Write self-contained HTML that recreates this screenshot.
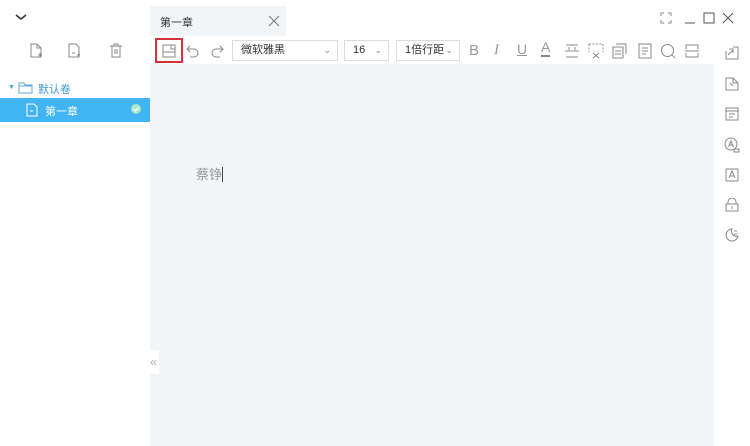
<!DOCTYPE html>
<html><head><meta charset="utf-8"><style>
*{margin:0;padding:0;box-sizing:border-box}
body{width:750px;height:446px;overflow:hidden;background:#fff;font-family:"Liberation Sans","Noto Sans CJK SC",sans-serif;position:relative;font-size:12px;color:#333}
.a{position:absolute}
svg{position:absolute;fill:none;stroke:#888;stroke-width:1}
.sel{border:1px solid #ddd;background:#fff;height:21px;top:40px;font-size:11px;line-height:19px;padding-left:8px;color:#333}
.sel i{position:absolute;right:6px;top:0;font-style:normal;font-size:9px;color:#888}
</style></head><body>
<svg style="left:14px;top:12px" width="14" height="10"><path d="M2 3l5 4 5-4" stroke="#333" stroke-width="1.6"/></svg>
<svg style="left:28px;top:43px" width="16" height="16"><path d="M3 1h6l4 4v9H3z M9 1v4h4 M10 12h4 M12 10v4"/></svg>
<svg style="left:66px;top:43px" width="16" height="16"><path d="M3 1h7l3 3v10H3z M6 10h3 M11 12h3 M12.5 10.5v3"/></svg>
<svg style="left:108px;top:43px" width="16" height="16"><path d="M2 3h12 M6 3V1h4v2 M4 3v11h8V3 M7 6v5 M9 6v5"/></svg>
<div class="a" style="left:8px;top:84px;font-size:7px;color:#4aa6d8">▼</div>
<svg style="left:18px;top:81px" width="16" height="14"><path d="M1 2h5l1 2h7v8H1z M1 5h13" stroke="#5aa9d6"/></svg>
<div class="a" style="left:38px;top:81px;font-size:11px;color:#3b9bd1">默认卷</div>
<div class="a" style="left:0;top:98px;width:150px;height:24px;background:#41b4f3"></div>
<svg style="left:26px;top:103px" width="12" height="14"><path d="M1 1h7l3 3v9H1z M4 8h3" stroke="#fff"/></svg>
<div class="a" style="left:45px;top:103px;font-size:11px;color:#fff">第一章</div>
<div class="a" style="left:131px;top:104px;width:10px;height:10px;border-radius:50%;background:#a7e7c8"></div>
<svg style="left:131px;top:104px" width="10" height="10"><path d="M2.5 5l2 2 3-3.5" stroke="#fff" stroke-width="1.3"/></svg>
<div class="a" style="left:150px;top:36px;width:564px;height:410px;background:#f2f5f8"></div>
<div class="a" style="left:150px;top:6px;width:136px;height:30px;background:#f2f5f8"></div>
<div class="a" style="left:160px;top:14px;font-size:11px;color:#333">第一章</div>
<svg style="left:268px;top:15px" width="12" height="12"><path d="M1 1l10 10M11 1L1 11" stroke="#777"/></svg>
<div class="a" style="left:150px;top:36px;width:564px;height:28px;background:#fff"></div>
<div class="a" style="left:155px;top:38px;width:28px;height:25px;border:2px solid #d0343a"></div>
<svg style="left:162px;top:44px" width="14" height="14"><path d="M1 1h12v12H1z M1 8h12 M9 1v4h4"/></svg>
<svg style="left:186px;top:44px" width="14" height="14"><path d="M4 2L1 5l3 3 M1 5h7a4 4 0 010 8H4"/></svg>
<svg style="left:210px;top:44px" width="14" height="14"><path d="M10 2l3 3-3 3 M13 5H6a4 4 0 000 8h4"/></svg>
<div class="a sel" style="left:232px;width:106px">微软雅黑<i>⌄</i></div>
<div class="a sel" style="left:344px;width:45px">16<i>⌄</i></div>
<div class="a sel" style="left:396px;width:64px">1倍行距<i>⌄</i></div>
<div class="a" style="left:469px;top:42px;font-size:15px;color:#999;font-weight:normal">B</div>
<div class="a" style="left:494px;top:42px;font-size:15px;color:#999;font-family:'Liberation Serif';font-style:italic">I</div>
<div class="a" style="left:517px;top:41px;font-size:14px;color:#999;text-decoration:underline">U</div>
<div class="a" style="left:541px;top:40px;font-size:14px;color:#999;border-bottom:2px solid #888;line-height:15px">A</div>
<svg style="left:564px;top:43px" width="16" height="16"><path d="M2 2h12 M1 8h14 M2 14h12 M5 4v3 M11 4v3"/></svg>
<svg style="left:588px;top:43px" width="16" height="16"><path d="M1 1h14v8 M1 1v8" stroke-dasharray="2 1.5"/><path d="M5 10l6 5 M11 10l-6 5"/></svg>
<svg style="left:612px;top:43px" width="16" height="16"><path d="M4 1h10v10 M1 4h10v11H1z M3 8h6 M3 11h6"/></svg>
<svg style="left:637px;top:43px" width="16" height="16"><path d="M2 1h12v14H2z M5 5h6 M5 8h6 M5 11h4"/></svg>
<svg style="left:660px;top:43px" width="16" height="16"><circle cx="7.5" cy="7.5" r="6"/><path d="M12 12l3 3"/></svg>
<svg style="left:684px;top:43px" width="16" height="16"><path d="M2 6V2h12v4 M2 10v4h12v-4 M1 8h14"/></svg>
<div class="a" style="left:196px;top:164px;font-size:13px;color:#999">蔡铮<span style="display:inline-block;width:1px;height:15px;background:#444;vertical-align:-3px"></span></div>
<div class="a" style="left:150px;top:350px;width:9px;height:24px;background:#fff;font-size:12px;color:#aaa;line-height:24px">«</div>
<svg style="left:660px;top:12px" width="12" height="12"><path d="M1 4V1h3 M8 1h3v3 M11 8v3H8 M4 11H1V8"/></svg>
<svg style="left:684px;top:12px" width="12" height="12"><path d="M1 11h10" stroke="#555"/></svg>
<svg style="left:703px;top:12px" width="12" height="12"><path d="M1 1h10v10H1z" stroke="#555"/></svg>
<svg style="left:722px;top:12px" width="12" height="12"><path d="M1 1l10 10M11 1L1 11" stroke="#555"/></svg>
<svg style="left:725px;top:46px" width="14" height="14"><path d="M1 5v8h12V1H8 M3 9l5-5 M4 3h4v4"/></svg>
<svg style="left:725px;top:77px" width="14" height="14"><path d="M1 1h7l5 5v7H1z M8 1v5h5 M5 6l3 3"/></svg>
<svg style="left:725px;top:107px" width="14" height="14"><path d="M1 1h12v12H1z M1 4h12 M4 7h6 M4 10h4"/></svg>
<svg style="left:724px;top:137px" width="16" height="16"><circle cx="7" cy="7" r="6"/><path d="M4.5 10l2.5-6 2.5 6 M5.5 8h3 M10 12h5v3h-5z"/></svg>
<svg style="left:725px;top:168px" width="14" height="14"><path d="M1 1h12v12H1z M4 10l3-7 3 7 M5 8h4"/></svg>
<svg style="left:725px;top:198px" width="14" height="14"><path d="M3 6V4a4 4 0 018 0v2 M1 6h12v7H1z M7 8v3"/></svg>
<svg style="left:725px;top:228px" width="14" height="14"><path d="M7 1a6 6 0 106 7 A5 5 0 017 1z M9 3h3 M9 6h3"/></svg>
</body></html>
